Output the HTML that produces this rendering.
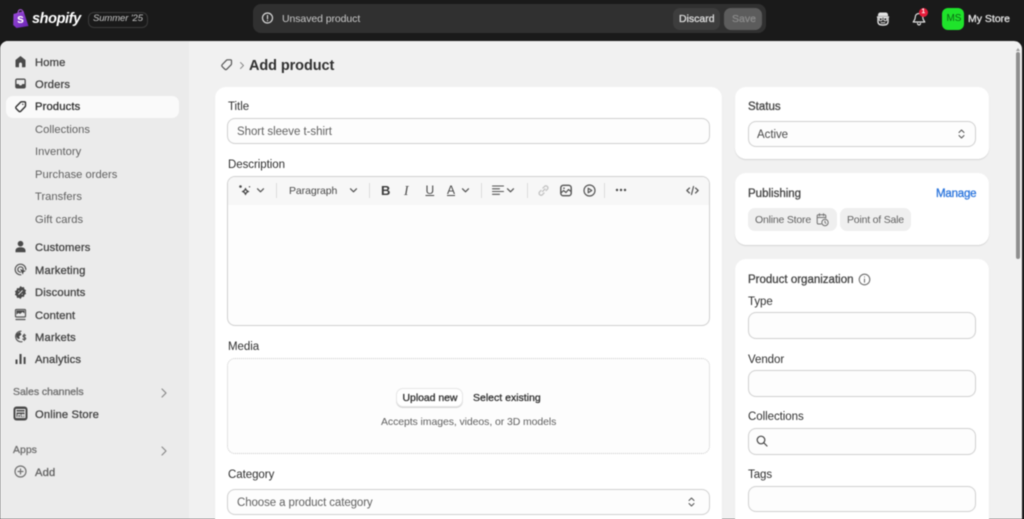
<!DOCTYPE html>
<html><head><meta charset="utf-8"><title>Add product</title>
<style>
html,body{margin:0;padding:0;width:1024px;height:519px;overflow:hidden;background:#1a1a1a}
body{font-family:"Liberation Sans",sans-serif;font-size:11.5px;color:#303030;position:relative;filter:blur(.4px)}
.a,.t,.box,svg{position:absolute}
.t{white-space:nowrap;line-height:16px;letter-spacing:-.05px;transform:translateY(-7px)}
.n{left:35px;color:#444;font-size:11.2px;letter-spacing:.15px;-webkit-text-stroke:.3px currentColor}
.s{left:35px;color:#616161;font-size:11.2px;letter-spacing:.02px}
.card{position:absolute;background:#fff;border-radius:11px;box-shadow:0 1px 1px rgba(0,0,0,.12)}
.box{background:#fdfdfd;border:1px solid #d0d0d0;border-radius:8px;box-sizing:border-box}
.l{color:#303030}
.ph{color:#616161}
.b{-webkit-text-stroke:.3px currentColor;letter-spacing:0}
svg{overflow:visible;fill:none;stroke:#555;stroke-width:1.2;stroke-linecap:round;stroke-linejoin:round}
.f{fill:#4a4a4a;stroke:none}
</style></head><body>

<!-- top bar -->
<svg style="left:13px;top:9px" width="16" height="19" viewBox="0 0 16 19"><path style="fill:url(#g);stroke:none" d="M.5 5 10.500 2 15.500 17 3.500 19 .2 16z"/><path style="stroke:#a855d8;stroke-width:1.100" d="M5 4.500C5 2 6 .7 7.500.7S10 2 10 3.800"/><defs><linearGradient id="g" x1="0" y1="0" x2="1" y2="1"><stop offset="0" stop-color="#9a4ad8"/><stop offset="1" stop-color="#6a23b5"/></linearGradient></defs></svg>
<div class="t" style="left:17px;top:18px;color:#fff;font-weight:700;font-size:12.500px">s</div>
<div class="t" style="left:32px;top:18px;color:#fff;font-weight:700;font-style:italic;font-size:14.500px;letter-spacing:-.4px">shopify</div>
<div class="a" style="left:88px;top:12px;width:58px;height:14px;border:1px solid #3a3a3a;border-radius:6px"></div>
<div class="t" style="left:93px;top:18px;color:#c4c4c4;font-style:italic;font-size:9.500px;letter-spacing:-.1px">Summer '25</div>

<div class="a" style="left:253px;top:4px;width:513px;height:29px;background:#303030;border-radius:8px"></div>
<svg style="left:261px;top:12px" width="13" height="13" viewBox="0 0 13 13"><path style="stroke:#d8d8d8" d="M6.500 1a5 5 0 0 1 5 5c0 2.700-2.200 5-5 5a5 5 0 0 1 0-10zM6.500 3.500v3.200M6.500 8.500v.1"/></svg>
<div class="t" style="left:282px;top:18px;color:#c8c8c8;font-size:10.500px;letter-spacing:-.08px">Unsaved product</div>
<div class="a" style="left:673px;top:8px;width:47px;height:22px;background:#3d3d3d;border-radius:7px"></div>
<div class="t b" style="left:679px;top:18px;color:#dedede;font-size:10.500px">Discard</div>
<div class="a" style="left:724px;top:8px;width:38px;height:22px;background:#5c5c5c;border-radius:7px"></div>
<div class="t b" style="left:732px;top:18px;color:#8a8a8a;font-size:10.500px">Save</div>

<svg style="left:876px;top:12px" width="14" height="14" viewBox="0 0 14 14"><path class="f" style="fill:#e3e3e3" d="M2 3c0-1.500 1-2.500 2.500-2.500h5C11 .5 12 1.500 12 3v1H2z"/><path style="stroke:#e3e3e3;stroke-width:1.400" d="M1.500 5h11M2 5v5c0 2 2 3 5 3s5-1 5-3V5"/><circle cx="4.700" cy="7.200" r="1.500" style="stroke:#e3e3e3;stroke-width:1"/><circle cx="9.300" cy="7.200" r="1.500" style="stroke:#e3e3e3;stroke-width:1"/><path style="stroke:#e3e3e3;stroke-width:1" d="M5 10.700h4"/></svg>
<svg style="left:912px;top:12px" width="14" height="14" viewBox="0 0 14 14"><path style="stroke:#e3e3e3;stroke-width:1.200" d="M7 1.500c-2.500 0-3.800 1.800-3.800 4 0 2.400-1.500 3.600-2 4.500h11.600c-.5-.9-2-2.100-2-4.500 0-2.200-1.300-4-3.800-4zM5.500 11.500c.3 1 .9 1.500 1.500 1.500s1.200-.5 1.500-1.500"/></svg>
<div class="a" style="left:919px;top:8px;width:9px;height:9px;border-radius:50%;background:#e51c3a"></div>
<div class="t b" style="left:921.500px;top:11px;color:#fff;font-size:6.500px">1</div>
<div class="a" style="left:942px;top:8px;width:22px;height:22px;background:#1fe32b;border-radius:6px"></div>
<div class="t" style="left:946.500px;top:18px;color:#0b6b14;font-size:10px;letter-spacing:-.1px">MS</div>
<div class="t b" style="left:968px;top:18px;color:#e3e3e3;font-size:10.500px">My Store</div>

<!-- main surface -->
<div class="a" style="left:0;top:41px;width:1022px;height:478px;background:#f1f1f1;border-radius:8px 8px 0 0;overflow:hidden">
 <div class="a" style="left:0;top:0;width:189px;height:478px;background:#ebebeb"></div>
 <div class="a" style="left:1016px;top:11px;width:4px;height:207px;background:#8f8f8f;border-radius:2px"></div>
</div>
<div class="a" style="left:1016px;top:46px;width:0;height:0;border:2.500px solid transparent;border-bottom:3px solid #9a9a9a"></div>

<!-- sidebar -->
<div class="a" style="left:6px;top:96px;width:173px;height:22px;background:#fafafa;border-radius:7px"></div>
<svg style="left:14px;top:55px" width="13" height="13" viewBox="0 0 13 13"><path class="f" d="M6.500 1 1.500 5v6.500c0 .5.300.8.800.8H5V9c0-.8.700-1.500 1.500-1.500S8 8.200 8 9v3.300h2.700c.5 0 .8-.3.800-.8V5z"/></svg>
<svg style="left:14px;top:77px" width="13" height="13" viewBox="0 0 13 13"><path class="f" d="M3 1.500h7c1 0 1.800.8 1.800 1.800v6.400c0 1-.8 1.800-1.800 1.800H3c-1 0-1.800-.8-1.800-1.800V3.300c0-1 .8-1.800 1.800-1.800zm-.5 1.400v4.100h2.200c.3 1 1 1.500 1.800 1.500s1.500-.5 1.800-1.500h2.200V2.900z"/></svg>
<svg style="left:14px;top:100px" width="13" height="13" viewBox="0 0 13 13"><path style="stroke:#303030;stroke-width:1.400" d="M7.500 1.800h3c.6 0 1 .4 1 1v3c0 .4-.2.700-.4 1l-4.200 4.300c-.7.700-1.500.7-2.200 0L2.300 8.700c-.7-.7-.7-1.500 0-2.200L6.500 2.200c.3-.3.600-.4 1-.4z"/><circle cx="8.800" cy="4.300" r=".7" class="f" style="fill:#303030"/></svg>
<svg style="left:14px;top:240px" width="13" height="13" viewBox="0 0 13 13"><circle cx="6.500" cy="3.700" r="2.800" class="f"/><path class="f" d="M1.500 12.300v-1.800c0-2 1.800-3.300 5-3.300s5 1.300 5 3.300v1.800z"/></svg>
<svg style="left:14px;top:263px" width="13" height="13" viewBox="0 0 13 13"><path d="M11.800 6.500a5.300 5.300 0 1 0-5 5.300M9.200 6.500a2.700 2.700 0 1 0-2.600 2.700"/><path class="f" d="M6 6l6 2-2.300 1 -.9 2.600z"/></svg>
<svg style="left:14px;top:286px" width="13" height="13" viewBox="0 0 13 13"><path class="f" d="M6.500 0 8 1.300l2-.2.400 2 1.700 1.100-.8 1.800.8 1.800-1.700 1.100-.4 2-2-.2L6.500 13 5 11.700l-2 .2-.4-2L.9 8.800 1.700 7 .9 5.200l1.700-1.100.4-2 2 .2z"/><path style="stroke:#ebebeb;stroke-width:1" d="M4.700 8.300l3.600-3.600M4.800 4.900v.1M8.200 8.100v.1"/></svg>
<svg style="left:14px;top:308px" width="13" height="13" viewBox="0 0 13 13"><path d="M2.500 1.500h8c.6 0 1 .4 1 1v5.500c0 .6-.4 1-1 1h-8c-.6 0-1-.4-1-1V2.500c0-.6.4-1 1-1zM2 11.500h9"/><path class="f" d="M2.500 2.500h8v3l-2-1.500-2.500 2-1.500-1-2 1.500z"/></svg>
<svg style="left:14px;top:330px" width="13" height="13" viewBox="0 0 13 13"><path d="M7 1.200a5.300 5.300 0 1 0 1 10.500"/><path class="f" d="M2.500 4 6 2l1.500 2.500L5 6.500l1 2-2 .5-1.700-2z"/><path style="stroke-width:1.100" d="M11.500 5.500c-.5-.7-2.500-.8-2.500.6s2.700 1 2.700 2.400c0 1.400-2.200 1.300-2.900.5M10.300 4v6.500"/></svg>
<svg style="left:14px;top:352px" width="13" height="13" viewBox="0 0 13 13"><path class="f" d="M1.500 7.500h2v4.500h-2zM5.500 2h2.100v10H5.500zM9.600 5h2v7h-2z"/></svg>
<svg style="left:13px;top:406px" width="15" height="15" viewBox="0 0 15 15"><rect x=".5" y=".5" width="14" height="14" rx="3" class="f"/><path style="stroke:#ebebeb;stroke-width:1" d="M3 3.500h9v8H3zM3 6h9M5 11.500V8.500h2.200v3M9 8.500h1.800v1.500H9z"/></svg>
<svg style="left:14px;top:465px" width="13" height="13" viewBox="0 0 13 13"><circle cx="6.500" cy="6.500" r="5.500" style="stroke:#707070"/><path style="stroke:#707070" d="M6.500 4v5M4 6.500h5"/></svg>
<svg style="left:161px;top:388px" width="6" height="10" viewBox="0 0 6 10"><path style="stroke:#8a8a8a" d="M1 1l4 4-4 4"/></svg>
<svg style="left:161px;top:446px" width="6" height="10" viewBox="0 0 6 10"><path style="stroke:#8a8a8a" d="M1 1l4 4-4 4"/></svg>

<div class="t n" style="top:62px">Home</div>
<div class="t n" style="top:84px">Orders</div>
<div class="t n" style="top:106px;color:#303030">Products</div>
<div class="t s" style="top:129px">Collections</div>
<div class="t s" style="top:151px">Inventory</div>
<div class="t s" style="top:174px">Purchase orders</div>
<div class="t s" style="top:196px">Transfers</div>
<div class="t s" style="top:219px">Gift cards</div>
<div class="t n" style="top:247px">Customers</div>
<div class="t n" style="top:270px">Marketing</div>
<div class="t n" style="top:292px">Discounts</div>
<div class="t n" style="top:315px">Content</div>
<div class="t n" style="top:337px">Markets</div>
<div class="t n" style="top:359px">Analytics</div>
<div class="t b" style="left:13px;top:391px;color:#707070;font-size:10.500px;letter-spacing:-.05px">Sales channels</div>
<div class="t n" style="top:414px">Online Store</div>
<div class="t b" style="left:13px;top:449px;color:#707070;font-size:10.500px">Apps</div>
<div class="t n" style="top:472px;color:#616161">Add</div>

<!-- header -->
<svg style="left:220px;top:58px" width="13" height="13" viewBox="0 0 13 13"><path d="M7.500 1.800h3c.6 0 1 .4 1 1v3c0 .4-.2.700-.4 1l-4.200 4.300c-.7.700-1.500.7-2.200 0L2.300 8.700c-.7-.7-.7-1.500 0-2.200L6.500 2.200c.3-.3.600-.4 1-.4z"/></svg>
<svg style="left:240px;top:62px" width="4" height="7" viewBox="0 0 4 7"><path style="stroke:#8a8a8a;stroke-width:1" d="M.5.500l3 3-3 3"/></svg>
<div class="t" style="left:249px;top:65px;font-weight:700;font-size:14.500px;letter-spacing:-.09px">Add product</div>

<!-- main card -->
<div class="card" style="left:215px;top:87px;width:507px;height:445px"></div>
<div class="t l" style="left:228px;top:106px">Title</div>
<div class="box" style="left:227px;top:118px;width:483px;height:26px"></div>
<div class="t ph" style="left:237px;top:131px">Short sleeve t-shirt</div>
<div class="t l" style="left:228px;top:164px">Description</div>
<div class="box" style="left:227px;top:176px;width:483px;height:150px"></div>
<div class="a" style="left:228px;top:177px;width:481px;height:28px;background:#f7f7f7;border-radius:7px 7px 0 0"></div>

<svg style="left:238px;top:184px" width="14" height="13" viewBox="0 0 14 13"><path class="f" d="M7.500 3.500 9 6l2.500 1.500L9 9 7.500 11.500 6 9 3.500 7.500 6 6z"/><circle cx="7.500" cy="7.500" r="1" style="fill:#f7f7f7;stroke:none"/><circle cx="2.500" cy="2.500" r="1.300" class="f"/><circle cx="11.500" cy="2.800" r=".7" class="f"/></svg>
<svg style="left:257px;top:188px" width="7" height="5" viewBox="0 0 7 5"><path d="M.5.800 3.500 3.800 6.500.800"/></svg>
<div class="a" style="left:276px;top:183px;width:1px;height:15px;background:#dcdcdc"></div>
<div class="t" style="left:289px;top:190px;color:#4a4a4a;font-size:10.500px;letter-spacing:-.08px">Paragraph</div>
<svg style="left:350px;top:188px" width="7" height="5" viewBox="0 0 7 5"><path d="M.5.800 3.500 3.800 6.500.800"/></svg>
<div class="a" style="left:369px;top:183px;width:1px;height:15px;background:#dcdcdc"></div>
<div class="t" style="left:381px;top:190px;font-weight:700;font-size:13px;color:#3a3a3a">B</div>
<div class="t" style="left:404px;top:190px;font-family:'Liberation Serif',serif;font-style:italic;font-size:13.500px;color:#4a4a4a">I</div>
<div class="t" style="left:425.500px;top:189px;font-size:12px;color:#4a4a4a;text-decoration:underline;letter-spacing:0">U</div>
<div class="t" style="left:447px;top:189px;font-size:12px;color:#4a4a4a;text-decoration:underline;letter-spacing:0">A</div>
<svg style="left:462px;top:188px" width="7" height="5" viewBox="0 0 7 5"><path d="M.5.800 3.500 3.800 6.500.800"/></svg>
<div class="a" style="left:481px;top:183px;width:1px;height:15px;background:#dcdcdc"></div>
<svg style="left:492px;top:185px" width="12" height="11" viewBox="0 0 12 11"><path style="stroke-width:1.100" d="M.5 1h11M.5 3.800h7M.5 6.500h11M.5 9.300h7"/></svg>
<svg style="left:507px;top:188px" width="7" height="5" viewBox="0 0 7 5"><path d="M.5.800 3.500 3.800 6.500.800"/></svg>
<div class="a" style="left:527px;top:183px;width:1px;height:15px;background:#dcdcdc"></div>
<svg style="left:537px;top:184px" width="13" height="13" viewBox="0 0 13 13"><path style="stroke:#c4c4c4;stroke-width:1.300" d="M5.500 7.500 8 5M4 6.500 2.500 8a2 2 0 0 0 2.800 2.800L7 9M6 4l1.700-1.700a2 2 0 0 1 2.800 2.800L9 6.500"/></svg>
<svg style="left:560px;top:184px" width="12" height="13" viewBox="0 0 12 13"><rect x=".8" y="1.300" width="10.400" height="10.400" rx="2.500" style="stroke-width:1.400"/><path style="stroke-width:1.200" d="M1 9l2.500-2.500 2.500 2 2.500-3 2.500 2"/><circle cx="4" cy="4.200" r=".8" class="f"/></svg>
<svg style="left:583px;top:184px" width="13" height="13" viewBox="0 0 13 13"><circle cx="6.500" cy="6.500" r="5.500"/><path d="M5.200 4.200 8.800 6.500 5.200 8.800z"/></svg>
<div class="a" style="left:604px;top:183px;width:1px;height:15px;background:#dcdcdc"></div>
<svg style="left:615px;top:188px" width="12" height="4" viewBox="0 0 12 4"><circle cx="2" cy="2" r="1.200" class="f"/><circle cx="6" cy="2" r="1.200" class="f"/><circle cx="10" cy="2" r="1.200" class="f"/></svg>
<svg style="left:686px;top:184px" width="13" height="13" viewBox="0 0 13 13"><path d="M3.500 4 .8 6.500 3.500 9M9.500 4l2.700 2.500L9.500 9M7.500 2.500 5.500 10.500"/></svg>

<div class="t l" style="left:228px;top:346px">Media</div>
<div class="box" style="left:227px;top:358px;width:483px;height:96px;border:1px dotted #c8c8c8"></div>
<div class="a" style="left:397px;top:389px;width:65px;height:17px;background:#fff;border-radius:6px;box-shadow:0 0 0 1px #e6e6e6,0 1px 0 1px #d6d6d6"></div>
<div class="t b" style="left:402.500px;top:397px;font-size:10.500px;letter-spacing:-.05px">Upload new</div>
<div class="t b" style="left:473px;top:397px;font-size:10.500px">Select existing</div>
<div class="t ph" style="left:381px;top:421px;font-size:10.500px;letter-spacing:-.09px">Accepts images, videos, or 3D models</div>
<div class="t l" style="left:228px;top:474px">Category</div>
<div class="box" style="left:227px;top:489px;width:483px;height:26px"></div>
<div class="t ph" style="left:237px;top:502px;letter-spacing:-.1px">Choose a product category</div>
<svg style="left:688px;top:497px" width="7" height="10" viewBox="0 0 7 10"><path style="stroke-width:1" d="M1 3.500 3.500 1 6 3.500M1 6.500 3.500 9 6 6.500"/></svg>

<!-- status -->
<div class="card" style="left:735px;top:87px;width:254px;height:72px"></div>
<div class="t b" style="left:748px;top:106px;color:#444">Status</div>
<div class="box" style="left:748px;top:121px;width:228px;height:26px"></div>
<div class="t ph" style="left:757px;top:134px;color:#4a4a4a">Active</div>
<svg style="left:958px;top:129px" width="7" height="10" viewBox="0 0 7 10"><path style="stroke-width:1" d="M1 3.500 3.500 1 6 3.500M1 6.500 3.500 9 6 6.500"/></svg>

<!-- publishing -->
<div class="card" style="left:735px;top:173px;width:254px;height:72px"></div>
<div class="t b" style="left:748px;top:193px;color:#444">Publishing</div>
<div class="t b" style="left:936px;top:193px;color:#2b75dd;letter-spacing:-.2px">Manage</div>
<div class="a" style="left:748px;top:208px;width:89px;height:23px;background:#efefef;border-radius:7px"></div>
<div class="t ph" style="left:755px;top:219px;font-size:10.500px;letter-spacing:-.2px">Online Store</div>
<svg style="left:816px;top:213px" width="13" height="14" viewBox="0 0 13 14"><path style="stroke:#707070;stroke-width:1" d="M5 11H2.500c-.8 0-1.300-.5-1.300-1.300V3c0-.8.500-1.300 1.300-1.300h6c.8 0 1.300.5 1.300 1.300v2M1.200 4.500h8.600M3.500.7v2M7.500.7v2"/><circle cx="9" cy="9.500" r="3.200" style="stroke:#707070;stroke-width:1"/><path style="stroke:#707070;stroke-width:.9" d="M9 8v1.700l1 .6"/></svg>
<div class="a" style="left:840px;top:208px;width:71px;height:23px;background:#efefef;border-radius:7px"></div>
<div class="t ph" style="left:847px;top:219px;font-size:10.500px;letter-spacing:-.2px">Point of Sale</div>

<!-- org -->
<div class="card" style="left:735px;top:259px;width:254px;height:280px"></div>
<div class="t b" style="left:748px;top:279px;color:#444">Product organization</div>
<svg style="left:858px;top:273px" width="13" height="13" viewBox="0 0 13 13"><circle cx="6.500" cy="6.500" r="5.300" style="stroke:#707070;stroke-width:1.100"/><path style="stroke:#707070;stroke-width:1.100" d="M6.500 6v3.200M6.500 3.900v.1"/></svg>
<div class="t l" style="left:748px;top:301px">Type</div>
<div class="box" style="left:748px;top:312px;width:228px;height:27px"></div>
<div class="t l" style="left:748px;top:359px">Vendor</div>
<div class="box" style="left:748px;top:370px;width:228px;height:27px"></div>
<div class="t l" style="left:748px;top:416px">Collections</div>
<div class="box" style="left:748px;top:428px;width:228px;height:27px"></div>
<svg style="left:756px;top:435px" width="12" height="12" viewBox="0 0 12 12"><circle cx="5" cy="5" r="3.800" style="stroke:#444"/><path style="stroke:#444" d="M8 8l3 3"/></svg>
<div class="t l" style="left:748px;top:474px">Tags</div>
<div class="box" style="left:748px;top:486px;width:228px;height:26px"></div>

</body></html>
